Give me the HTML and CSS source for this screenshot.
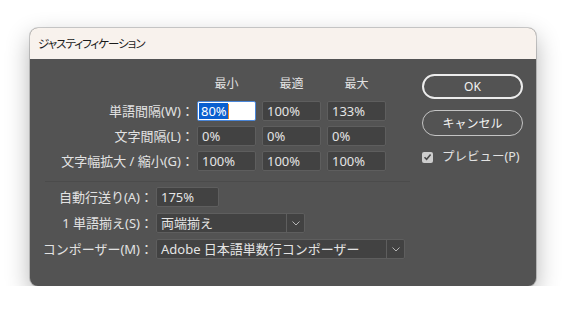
FILE: index.html
```html
<!DOCTYPE html>
<html lang="ja">
<head>
  <meta charset="UTF-8" />
  <title>ジャスティフィケーション</title>
  <link rel="stylesheet" href="styles.css">
</head>
<body>
  <div class="dialog">
    <!-- タイトルバー -->
    <div class="titlebar">ジャスティフィケーション</div>

    <div class="content">
      <!-- 左側: 設定フォーム -->
      <div class="form">
        <div class="row head">
          <span class="lbl"></span>
          <span class="col">最小</span>
          <span class="col">最適</span>
          <span class="col">最大</span>
        </div>

        <div class="row">
          <label class="lbl">単語間隔(W)：</label>
          <div class="field active"><span class="sel">80%</span><span class="caret"></span></div>
          <div class="field">100%</div>
          <div class="field">133%</div>
        </div>

        <div class="row">
          <label class="lbl">文字間隔(L)：</label>
          <div class="field">0%</div>
          <div class="field">0%</div>
          <div class="field">0%</div>
        </div>

        <div class="row">
          <label class="lbl">文字幅拡大 / 縮小(G)：</label>
          <div class="field">100%</div>
          <div class="field">100%</div>
          <div class="field">100%</div>
        </div>

        <div class="sep"></div>

        <div class="row lower">
          <label class="lbl">自動行送り(A)：</label>
          <div class="field wide">175%</div>
        </div>

        <div class="row lower">
          <label class="lbl">1 単語揃え(S)：</label>
          <div class="select short">
            <span class="val">両端揃え</span>
            <span class="arrow"><svg width="8" height="5" viewBox="0 0 8 5"><path d="M0.5 0.5 L4 4 L7.5 0.5" fill="none" stroke="#b5b5b5" stroke-width="1"/></svg></span>
          </div>
        </div>

        <div class="row lower">
          <label class="lbl">コンポーザー(M)：</label>
          <div class="select long">
            <span class="val">Adobe 日本語単数行コンポーザー</span>
            <span class="arrow"><svg width="8" height="5" viewBox="0 0 8 5"><path d="M0.5 0.5 L4 4 L7.5 0.5" fill="none" stroke="#b5b5b5" stroke-width="1"/></svg></span>
          </div>
        </div>
      </div>

      <!-- 右側: ボタン -->
      <div class="side">
        <button class="btn primary">OK</button>
        <button class="btn">キャンセル</button>
        <label class="check">
          <span class="box"><svg width="9" height="8" viewBox="0 0 9 8"><path d="M1.5 4.2 L3.6 6.3 L7.6 1.5" fill="none" stroke="#4a4a4a" stroke-width="1.6"/></svg></span>
          プレビュー(P)
        </label>
      </div>
    </div>
  </div>
</body>
</html>
```

FILE: styles.css
```css
/* ページ全体 */
body {
  margin: 0;
  background-color: #ffffff;
  font-family: "Noto Sans", "Noto Sans CJK JP", sans-serif;
  color: #e2e2e2;
}

/* ダイアログ本体 */
.dialog {
  width: 506px;
  height: 258px;
  margin: 28px 0 0 30px;
  background-color: #535353;
  border-radius: 8px;
  overflow: hidden;
  box-shadow: 0 0 0 1px rgba(0, 0, 0, 0.18), 0 9px 24px rgba(0, 0, 0, 0.3);
}

/* タイトルバー */
.titlebar {
  height: 31px;
  line-height: 31px;
  padding-left: 8px;
  background-color: #f8f2ed;
  color: #1b1b1b;
  font-family: "Noto Sans CJK JP", sans-serif;
  font-size: 11.5px;
  letter-spacing: -1px;
  font-feature-settings: "palt";
}

.content {
  display: flex;
}

/* 左側フォーム */
.form {
  width: 380px;
  padding-top: 18px;
  display: flex;
  flex-direction: column;
}

.row {
  display: flex;
  align-items: center;
  gap: 6px;
  height: 20px;
  margin-bottom: 5px;
  font-size: 13px;
}

.row.head {
  height: 14px;
  margin-bottom: 10px;
  font-size: 12px;
}

.row.lower {
  margin-bottom: 6px;
}

.lbl {
  width: 164px;
  margin-right: -3px;
  text-align: right;
  white-space: nowrap;
  line-height: 20px;
}

.lower .lbl {
  width: 123px;
}

.col {
  width: 59px;
  text-align: center;
  line-height: 14px;
}

/* 入力欄 */
.field {
  box-sizing: border-box;
  width: 59px;
  height: 20px;
  padding-left: 4px;
  line-height: 18px;
  background-color: #424242;
  border: 1px solid #5e5e5e;
  border-radius: 2px;
  color: #e4e4e4;
}

.field.wide {
  width: 63px;
}

.field.active {
  display: flex;
  align-items: center;
  padding-left: 1px;
  background-color: #ffffff;
  border-color: #4a86d8;
}

.sel {
  background-color: #0a5fcf;
  color: #ffffff;
  padding: 0 1px 0 2px;
  line-height: 16px;
}

.caret {
  width: 1px;
  height: 15px;
  background-color: #f08a24;
}

/* 区切り線 */
.sep {
  height: 1px;
  margin: 5px 0 5px 15px;
  background-color: #4b4b4b;
}

/* セレクトボックス */
.select {
  box-sizing: border-box;
  display: flex;
  height: 20px;
  background-color: #424242;
  border: 1px solid #5e5e5e;
  border-radius: 2px;
  color: #e4e4e4;
}

.select.short {
  width: 149px;
}

.select.long {
  width: 249px;
}

.select .val {
  flex: 1;
  padding-left: 4px;
  line-height: 18px;
  white-space: nowrap;
}

.select .arrow {
  width: 17px;
  border-left: 1px solid #5e5e5e;
  display: flex;
  align-items: center;
  justify-content: center;
}

/* 右側ボタン */
.side {
  width: 101px;
  margin-left: 12px;
  padding-top: 15px;
  display: flex;
  flex-direction: column;
}

.btn {
  box-sizing: border-box;
  height: 26px;
  background-color: #535353;
  color: #f2f2f2;
  border: 1px solid #c4c4c4;
  border-radius: 13px;
  font-family: "Noto Sans", "Noto Sans CJK JP", sans-serif;
  font-size: 12px;
  padding: 0;
  cursor: pointer;
}

.btn.primary {
  height: 25px;
  border: 2px solid #ececec;
  margin-bottom: 11px;
}

.check {
  display: flex;
  align-items: center;
  gap: 9px;
  margin-top: 14px;
  font-size: 12.5px;
  line-height: 14px;
  white-space: nowrap;
}

.box {
  width: 11px;
  height: 11px;
  background-color: #cdcdcd;
  border-radius: 2px;
  display: flex;
  align-items: center;
  justify-content: center;
}
```
